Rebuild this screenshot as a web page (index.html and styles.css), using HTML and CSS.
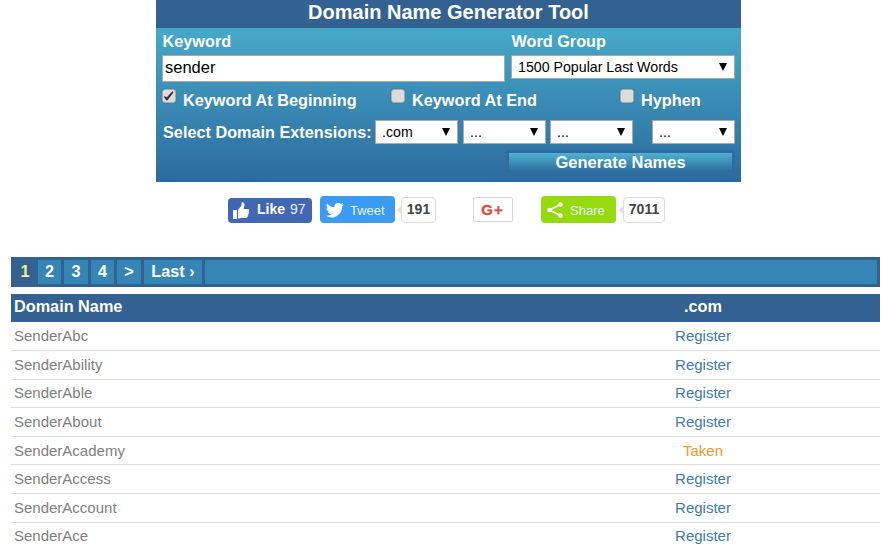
FILE: index.html
```html
<!DOCTYPE html>
<html lang="en">
<head>
<meta charset="utf-8">
<title>Domain Name Generator Tool</title>
<link rel="stylesheet" href="styles.css">
</head>
<body>
<form class="tool">
  <h1 class="tool-title">Domain Name Generator Tool</h1>
  <div class="tool-body">
    <div class="field-row">
      <div class="field field-keyword">
        <label class="field-label">Keyword</label>
        <input class="keyword-input" type="text" value="sender">
      </div>
      <div class="field field-group">
        <label class="field-label">Word Group</label>
        <div class="sel sel-wide"><span>1500 Popular Last Words</span><i class="arrow"></i></div>
      </div>
    </div>
    <div class="check-row">
      <label class="check check-a"><span class="box"><svg viewBox="0 0 14 14" width="14" height="14"><path d="M2.200 7 4.800 8.200 10.400 2.300 11.400 3.600 5.600 11.300 4.200 11.300 2.200 8.600Z" fill="#333"/></svg></span>Keyword At Beginning</label>
      <label class="check check-b"><span class="box"></span>Keyword At End</label>
      <label class="check check-c"><span class="box"></span>Hyphen</label>
    </div>
    <div class="ext-row">
      <span class="ext-label">Select Domain Extensions:</span>
      <div class="sel sel-ext"><span>.com</span><i class="arrow"></i></div>
      <div class="sel sel-ext sel-tight"><span>...</span><i class="arrow"></i></div>
      <div class="sel sel-ext"><span>...</span><i class="arrow"></i></div>
      <div class="sel sel-ext sel-last"><span>...</span><i class="arrow"></i></div>
    </div>
    <div class="submit-row"><button class="generate" type="button">Generate Names</button></div>
  </div>
</form>

<div class="social">
  <a class="btn btn-like"><svg viewBox="0 0 18 18" width="18" height="18"><path d="M1 8h4v9H1zM6 8l3.500-4.500V0.800c0-.8 2.800-.8 3 1.700.1 1.500-.7 3-1 4.500h4.300c1.500 0 1.700 1.700.7 2.300.8.700.6 2-.3 2.400.5.800.2 1.800-.6 2.100.3 1-.3 2.200-1.600 2.200H8.500C7.500 17 6.800 16.500 6 16.200z" fill="#fff"/></svg><b class="like-text">Like</b><span class="like-text">97</span></a>
  <a class="btn btn-tweet"><svg viewBox="0 0 24 24" width="18" height="18"><path d="M23.500 4.600c-.9.400-1.800.6-2.800.8 1-.6 1.800-1.600 2.100-2.700-.9.600-2 1-3.100 1.200a4.900 4.900 0 0 0-8.300 4.500C7.400 8.200 3.800 6.200 1.400 3.300c-1.300 2.200-.6 5.100 1.500 6.500-.8 0-1.500-.2-2.200-.6 0 2.300 1.600 4.400 3.900 4.900-.7.200-1.500.2-2.200.1.600 2 2.400 3.300 4.600 3.400A9.900 9.900 0 0 1 0 19.600a14 14 0 0 0 21.500-12.400c1-.7 1.800-1.600 2-2.600z" fill="#fff"/></svg><span>Tweet</span></a>
  <span class="count count-tweet">191</span>
  <a class="gplus"><b>G</b><b class="plus">+</b></a>
  <a class="btn btn-share"><svg viewBox="0 0 18 18" width="18" height="18"><path d="M14.500 3.500 3.500 9l11 5.500" fill="none" stroke="#fff" stroke-width="1.500"/><circle cx="14.500" cy="3.500" r="2.300" fill="#fff"/><circle cx="3.500" cy="9" r="2.300" fill="#fff"/><circle cx="14.500" cy="14.500" r="2.300" fill="#fff"/></svg><span>Share</span></a>
  <span class="count count-share">7011</span>
</div>

<nav class="pager">
  <a class="page current">1</a>
  <a class="page">2</a>
  <a class="page page-w">3</a>
  <a class="page">4</a>
  <a class="page page-w">&gt;</a>
  <a class="page page-last">Last ›</a>
  <span class="page page-fill"></span>
</nav>

<table class="results">
  <thead><tr><th class="col-name">Domain Name</th><th class="col-ext">.com</th></tr></thead>
  <tbody>
    <tr><td>SenderAbc</td><td class="reg">Register</td></tr>
    <tr><td>SenderAbility</td><td class="reg">Register</td></tr>
    <tr><td>SenderAble</td><td class="reg">Register</td></tr>
    <tr><td>SenderAbout</td><td class="reg">Register</td></tr>
    <tr><td>SenderAcademy</td><td class="taken">Taken</td></tr>
    <tr><td>SenderAccess</td><td class="reg">Register</td></tr>
    <tr><td>SenderAccount</td><td class="reg">Register</td></tr>
    <tr><td>SenderAce</td><td class="reg">Register</td></tr>
  </tbody>
</table>
</body>
</html>
```
FILE: styles.css
```css
* { box-sizing: border-box; }
html, body { height: 550px; overflow: hidden; }
body {
  margin: 0;
  padding: 0 8px 0 11px;
  background: #fff;
  font-family: "Liberation Sans", Arial, sans-serif;
}
.tool {
  width: 585px;
  height: 182px;
  margin-left: 145px;
  color: #fff;
  font-weight: 700;
}
.tool-title {
  margin: 0;
  height: 28px;
  background: #336292;
  font-size: 20px;
  line-height: 24px;
  text-align: center;
}
.tool-body {
  height: 154px;
  padding: 4px 6px 0;
  background: linear-gradient(#46a9c9, #2c6a9e);
}
.field-row { display: flex; gap: 6px; }
.field-label { display: block; font-size: 16.25px; line-height: 18px; margin-bottom: 5px; padding-left: .5px; }
.field-keyword { width: 343px; }
.field-group { width: 224px; }
.keyword-input {
  display: block;
  width: 343px;
  height: 27px;
  padding: 0 2px 2px;
  border: 1px solid #aaa;
  border-radius: 0;
  font: 16.5px "Liberation Sans", Arial, sans-serif;
  color: #000;
  background: #fff;
}
.sel {
  display: flex;
  align-items: center;
  justify-content: space-between;
  height: 24px;
  padding: 0 7px 0 6px;
  border: 1px solid #aaa;
  background: #fff;
  color: #000;
  font-weight: 400;
  font-size: 14.2px;
}
.sel-wide { width: 224px; }
.arrow {
  width: 0;
  height: 0;
  border-left: 4px solid transparent;
  border-right: 4px solid transparent;
  border-top: 8px solid #000;
}
.check-row { display: flex; height: 28px; margin-top: 4px; padding-top: 4px; font-size: 16.25px; }
.check { display: flex; align-items: flex-start; line-height: 20px; height: 20px; }
.box {
  flex: none;
  width: 14px;
  height: 14px;
  margin-top: -1px;
  margin-right: 7px;
  border: 1px solid #aaa;
  border-radius: 3px;
  background: #dcdcdc;
  box-shadow: 0 0 1px rgba(0,0,0,.35);
}
.box svg { display: block; margin: -1px 0 0 -1px; }
.check-a { width: 229px; }
.check-b { width: 229px; }
.ext-row { display: flex; align-items: center; margin-top: 6px; height: 24px; }
.ext-label { width: 213px; font-size: 16.25px; padding-left: 1px; flex: none; white-space: nowrap; }
.sel-ext { width: 83px; margin-right: 5px; }
.sel-tight { margin-right: 4px; }
.sel-last { margin-left: 14px; margin-right: 0; }
.submit-row { display: flex; justify-content: flex-end; margin-top: 6px; }
.generate {
  display: block;
  width: 229px;
  height: 25px;
  padding: 0 0 1px;
  border: 3px solid #2f6c9f;
  background: linear-gradient(#4fb1d1, #2c6a9e);
  color: #fff;
  font: 700 16.5px/16px "Liberation Sans", Arial, sans-serif;
}
.social {
  display: flex;
  align-items: flex-end;
  height: 27px;
  margin-top: 14px;
  margin-left: 217px;
}
.btn {
  display: flex;
  align-items: center;
  height: 27px;
  border-radius: 4px;
  color: #fff;
  font-size: 13px;
}
.btn-like { width: 84px; height: 25px; background: #4267b2; padding-left: 4px; gap: 7px; font-size: 14px; }
.like-text { margin-bottom: 3px; }
.btn-like span { margin-left: -2px; color: #e8edf7; }
.btn-tweet { width: 75px; margin-left: 8px; background: #3b9bf0; padding-left: 6px; gap: 6px; }
.btn-tweet span, .btn-share span { padding-top: 2px; color: #e6f3fd; }
.btn-share { width: 75px; margin-left: 28px; background: #95d90f; padding-left: 5px; gap: 6px; }
.count {
  position: relative;
  display: flex;
  align-items: center;
  justify-content: center;
  height: 26px;
  margin-left: 6px;
  padding-bottom: 2px;
  border: 1px solid #ddd;
  border-radius: 4px;
  background: #fff;
  color: #444;
  font-size: 14px;
  font-weight: 700;
}
.count::before {
  content: "";
  position: absolute;
  left: -4px;
  top: 9px;
  width: 6px;
  height: 6px;
  background: #e2e2e2;
  transform: rotate(45deg);
  z-index: -1;
}
.count-tweet { width: 35px; }
.count-share { width: 42px; margin-left: 7px; }
.gplus {
  display: flex;
  align-items: center;
  justify-content: center;
  gap: 1px;
  width: 40px;
  height: 25px;
  margin-left: 37px;
  margin-bottom: 1px;
  padding-right: 2px;
  border: 1px solid #d5d5d5;
  border-radius: 2px;
  background: #fff;
  color: #dc4e41;
  font-size: 15px;
  -webkit-text-stroke: .4px #dc4e41;
}
.pager {
  display: flex;
  gap: 3px;
  width: 869px;
  height: 30px;
  margin-top: 34px;
  padding: 3px 3px 3px 0;
  background: #336292;
  color: #fff;
  font-size: 16.25px;
  font-weight: 700;
}
.page {
  display: flex;
  align-items: center;
  justify-content: center;
  height: 24px;
  width: 23px;
  padding-bottom: 2px;
  background: #3585b5;
}
.page-w { width: 24px; }
.current { width: 24px; padding-left: 4px; background: #336292; color: #f4f08c; }
.page-last { width: 58px; }
.page-fill { flex: 1; }
.results {
  width: 869px;
  margin-top: 7px;
  border-collapse: collapse;
  table-layout: fixed;
  font-size: 15px;
}
.results th {
  height: 28px;
  padding: 0 3px 3px;
  background: #336292;
  color: #fff;
  font-size: 16.25px;
  font-weight: 700;
}
.col-name { text-align: left; width: 515px; }
.col-ext { text-align: center; }
.results td {
  height: 28.6px;
  padding: 0 3px 1px;
  border-bottom: 1px solid #ddd;
  color: #808080;
}
.results td.reg { text-align: center; color: #3f7cac; }
.results td.taken { text-align: center; color: #f0972f; }
```
